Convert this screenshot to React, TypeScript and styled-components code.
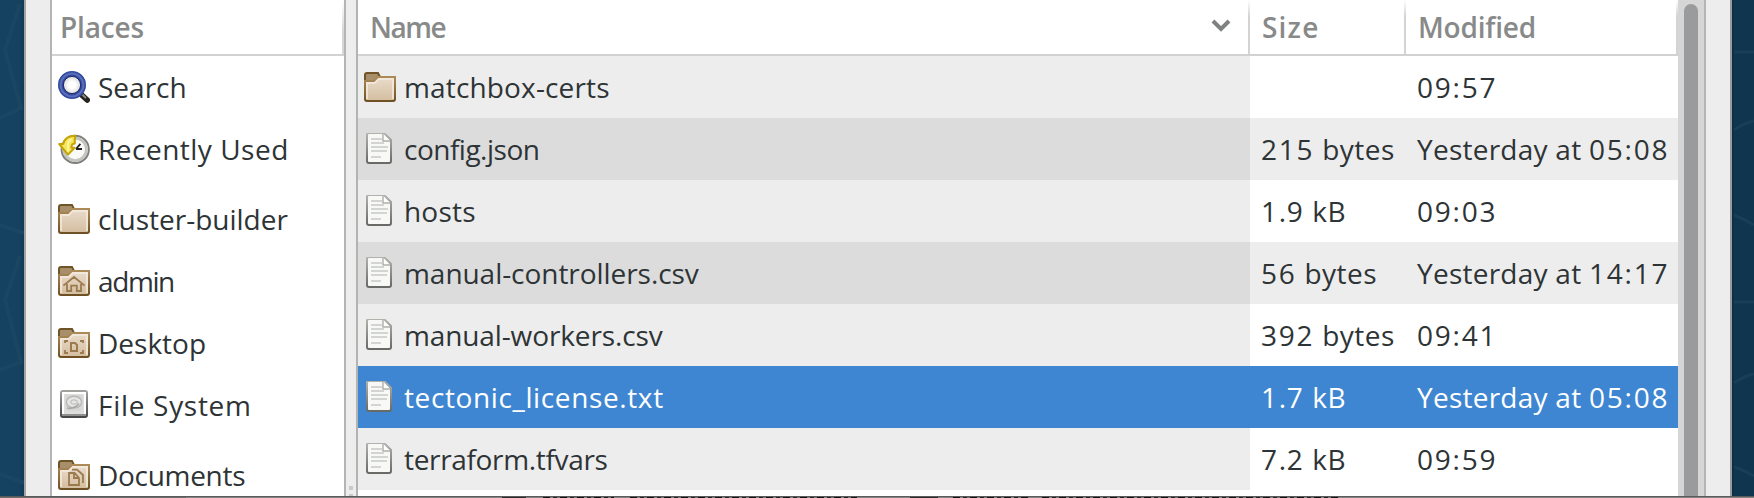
import React from 'react';
import styled, { createGlobalStyle, css } from 'styled-components';

const GlobalStyle = createGlobalStyle`
  * { box-sizing: border-box; }
  html, body { margin: 0; height: 100%; overflow: hidden; background: #144260; }
  body { font-family: 'Open Sans', 'Noto Sans', sans-serif; font-size: 28px; color: #2e3436; }
`;

const Screen = styled.div`
  width: 1754px;
  height: 498px;
  display: flex;
  flex-direction: column;
  overflow: hidden;
`;
const Stage = styled.div`
  height: 496px;
  display: flex;
`;
const Wallpaper = styled.div<{ $width: number; $side: 'left' | 'right' }>`
  width: ${p => p.$width}px;
  flex: none;
  background: ${p => p.$side === 'left'
    ? 'linear-gradient(90deg, #144260 80%, #113a55)'
    : 'linear-gradient(90deg, #0d2c42, #10354f 12%, #10354f)'};
  svg { display: block; }
`;
const Dialog = styled.div`
  width: 1708px;
  flex: none;
  display: flex;
  background: #ededed;
  border-left: 2px solid #a4a4a4;
  border-right: 2px solid #999c9a;
  padding: 0 24px;
`;
const Places = styled.div`
  width: 296px;
  flex: none;
  background: #fff;
  border-left: 2px solid #b4b4b4;
  border-right: 2px solid #b4b4b4;
`;
const PlacesHeader = styled.div`
  height: 56px;
  padding: 8px 0 0 8px;
  border-bottom: 2px solid #d2d2d2;
  color: #888a8a;
  font-weight: 600;
  background: linear-gradient(#fff, #d6d6d6 60%) right / 2px 100% no-repeat;
`;
const Place = styled.div<{ $gap?: boolean }>`
  height: 62px;
  margin-top: ${p => (p.$gap ? 8 : 0)}px;
  padding-left: 6px;
  display: flex;
  align-items: center;
  gap: 8px;
`;
const Label = styled.span<{ $track?: number }>`
  white-space: pre;
  line-height: 38px;
  letter-spacing: ${p => p.$track ?? 0}px;
`;
const Splitter = styled.div`
  width: 10px;
  flex: none;
  display: flex;
  flex-direction: column;
  justify-content: flex-end;
  align-items: center;
  gap: 4px;
  &::before, &::after { content: ''; width: 4px; height: 4px; background: #c9c9c9; }
  &::after { height: 2px; }
`;
const Files = styled.div`
  width: 1322px;
  flex: none;
  background: #fff;
  border-left: 2px solid #b2b4b2;
`;
const columns = css`
  display: grid;
  grid-template-columns: 892px 156px 272px;
`;
const HeaderRow = styled.div`
  ${columns}
  height: 56px;
  border-bottom: 2px solid #d2d2d2;
`;
const HeaderCell = styled.div`
  display: flex;
  justify-content: space-between;
  align-items: flex-start;
  padding: 8px 19px 0 12px;
  color: #888a8a;
  font-weight: 600;
  background: linear-gradient(#fff, #d4d4d4 30%) right / 2px 100% no-repeat;
  svg { margin-top: 11px; }
`;
const FileRow = styled.div<{ $odd: boolean; $selected?: boolean }>`
  ${columns}
  height: 62px;
  color: ${p => (p.$selected ? '#fff' : 'inherit')};
  background: ${p => (p.$selected ? '#3e86d1' : p.$odd ? '#ededed' : '#fff')};
  & > :first-child {
    background: ${p => (p.$selected ? '#3e86d1' : p.$odd ? '#dcdcdc' : '#ededed')};
  }
`;
const NameCell = styled.div`
  display: flex;
  align-items: center;
  gap: 8px;
  padding-left: 6px;
`;
const Cell = styled.div`
  display: flex;
  align-items: center;
  padding-left: 11px;
`;
const Trough = styled.div`
  width: 28px;
  flex: none;
  background: #d5d6d5;
  border-right: 2px solid #b4b6b4;
  padding: 4px 6px 0 6px;
`;
const Thumb = styled.div`
  height: 492px;
  border-radius: 7px 7px 0 0;
  background: #999b9d;
`;
const Taskbar = styled.div`
  height: 2px;
  display: flex;
  background: linear-gradient(90deg, #6b6b6b 186px, #858585 186px);
  border-top: 1px solid #5a5a5a;
`;
const TaskEdge = styled.div<{ $offset: number; $width: number; $worn?: boolean }>`
  margin-left: ${p => p.$offset}px;
  width: ${p => p.$width}px;
  height: 1px;
  background: ${p => (p.$worn
    ? 'repeating-linear-gradient(90deg, #111 0 7px, #858585 7px 10px, #222 10px 14px, #777 14px 17px)'
    : '#2c2c2c')};
`;

const FolderIcon = ({ kind }: { kind?: 'home' | 'desktop' | 'documents' }) => (
  <svg width="32" height="32" viewBox="0 -.5 16 16">
    <defs>
      <linearGradient id="folderFace" x1="0" y1="0" x2="0" y2="1">
        <stop offset="0" stopColor="#eadccb" /><stop offset="1" stopColor="#d3bd9f" />
      </linearGradient>
      <linearGradient id="folderEdge" x1="0" y1="0" x2="0" y2="1">
        <stop offset="0" stopColor="#ad8b59" /><stop offset="1" stopColor="#6f5023" />
      </linearGradient>
    </defs>
    <path d="M.5 13.5V1.5Q.5.5 1.5.5H7L8 2.5V6H.5" fill="#a88f6c" stroke="#6f5428" />
    <path d="M1.5 14.5Q.5 14.5.5 13.5V4.5H5L7 2.5H15.5V13.5Q15.5 14.5 14.5 14.5Z" fill="url(#folderFace)" stroke="url(#folderEdge)" />
    <path d="M1.5 13.5V5.5H5.4L7.4 3.5H14.5V13.5" fill="none" stroke="#f4ebe0" opacity=".75" />
    {kind === 'home' && (
      <path d="M2.7 9.8 8 5.5 13.3 9.8M4.5 9V12.5H6.6V9.8H9.4V12.5H11.5V9" fill="none" stroke="#9b7b4e" strokeWidth=".9" />
    )}
    {kind === 'desktop' && (
      <g fill="none" stroke="#9b7b4e">
        <path d="M3.5 7.5V6.5H5M11 6.5H12.5V7.5M3.5 11V12.5H5M11 12.5H12.5V11" strokeWidth=".9" />
        <path d="M6.5 7.5H8.5L9.5 8.5V11.5H6.5Z" />
      </g>
    )}
    {kind === 'documents' && (
      <g fill="none" stroke="#9b7b4e" strokeWidth=".9">
        <path d="M5.5 6.5H8.3L10.5 9V12.5H5.5Z M8 6.5V9H10.5" />
        <path d="M7 4.8H9.5L12.5 7.5V11.5" />
      </g>
    )}
  </svg>
);

const SearchIcon = () => (
  <svg width="32" height="32" viewBox="0 .5 16 16">
    <defs>
      <radialGradient id="lens"><stop offset=".3" stopColor="#fff" /><stop offset="1" stopColor="#c9cacc" /></radialGradient>
    </defs>
    <path d="M12 12.6 14.6 15" stroke="#25231f" strokeWidth="2.8" strokeLinecap="round" />
    <path d="M12.2 12.4 14 14" stroke="#8b8780" strokeWidth="1" />
    <circle cx="7" cy="7.5" r="5.6" fill="url(#lens)" stroke="#2f4a9e" strokeWidth="2.8" />
    <circle cx="7" cy="7.5" r="5.7" fill="none" stroke="#5b6dba" strokeWidth="1" />
    <circle cx="7" cy="7.5" r="4.3" fill="none" stroke="#232b62" strokeWidth=".5" />
  </svg>
);

const RecentIcon = () => (
  <svg width="32" height="32" viewBox="0 0 16 16">
    <circle cx="8.6" cy="8.2" r="6.8" fill="#fafaf9" stroke="#7e807c" />
    <circle cx="8.6" cy="8.2" r="5.6" fill="none" stroke="#c3c5c0" strokeWidth="1.4" />
    <path d="M9 8H12M9 8 11.2 5.4" stroke="#222" strokeWidth=".9" />
    <path d="M8.6 1.4C4.8 1.4 3.2 3 2.6 5.5H.6L5 10.8 8.3 7.4H6.7C6.7 5.9 7.2 5.2 8.4 5.2V3.2Z" fill="#f5e65a" stroke="#c6a405" strokeLinejoin="round" />
    <path d="M5 9.2V5.6Q5.2 3.6 6.8 3" fill="none" stroke="#fff9ae" strokeWidth=".8" />
  </svg>
);

const DiskIcon = () => (
  <svg width="32" height="32" viewBox="0 .5 16 16">
    <defs>
      <linearGradient id="disk" x1="0" y1="0" x2="0" y2="1"><stop offset="0" stopColor="#a0a29e" /><stop offset="1" stopColor="#454844" /></linearGradient>
    </defs>
    <rect x="1.5" y="1.5" width="13" height="13" rx="1" fill="#dededd" stroke="url(#disk)" />
    <path d="M2.5 13V2.5H13.5V13" fill="none" stroke="#fff" />
    <rect x="3.7" y="3.5" width="8.6" height="8" rx="1.5" fill="#d6d7d6" />
    <ellipse cx="8" cy="7" rx="3.8" ry="2.9" fill="#e6e6e5" stroke="#b6b8b5" strokeWidth=".7" />
    <ellipse cx="8" cy="7" rx="1.6" ry="1.1" fill="none" stroke="#c2c4c1" strokeWidth=".6" />
    <path d="M4.5 10Q8 10.8 10.5 7.8" fill="none" stroke="#a7a9a6" strokeWidth=".8" />
    <path d="M2 13.5H14" stroke="#8e918d" />
  </svg>
);

const FileIcon = () => (
  <svg width="32" height="32" viewBox="0 .5 16 16">
    <defs>
      <linearGradient id="sheet" x1="0" y1="0" x2="0" y2="1"><stop offset="0" stopColor="#b2b3ad" /><stop offset="1" stopColor="#686a65" /></linearGradient>
    </defs>
    <path d="M2.5.5H10L13.5 4V14.5Q13.5 15.5 12.5 15.5H2.5Q1.5 15.5 1.5 14.5V1.5Q1.5.5 2.5.5Z" fill="#f8f8f7" stroke="url(#sheet)" />
    <path d="M3.5 3.5H9M3.5 5.5H10M3.5 7.5H12M3.5 9.5H11.5M3.5 12.5H8.5" stroke="#d3d5d1" strokeWidth="1" />
    <path d="M9.5 1V4.5H13" fill="#fff" stroke="#aeb0aa" strokeWidth=".7" />
  </svg>
);

/* Figures are set wider than the words around them. */
const Value = ({ text, track }: { text: string; track: number }) => (
  <span>
    {text.split(/(\d[\d:]*)/).filter(Boolean).map((part, i) => (
      <Label key={i} $track={/\d/.test(part) ? 1.8 : track}>{part}</Label>
    ))}
  </span>
);

const places = [
  { name: 'Search', icon: <SearchIcon />, track: 0 },
  { name: 'Recently Used', icon: <RecentIcon />, track: 0.5 },
  { name: 'cluster-builder', icon: <FolderIcon />, gap: true, track: 0 },
  { name: 'admin', icon: <FolderIcon kind="home" />, track: -1.4 },
  { name: 'Desktop', icon: <FolderIcon kind="desktop" />, track: 0 },
  { name: 'File System', icon: <DiskIcon />, track: 0.7 },
  { name: 'Documents', icon: <FolderIcon kind="documents" />, gap: true, track: -0.3 },
];

const files = [
  { name: 'matchbox-certs', size: '', modified: '09:57', folder: true, track: 0.15 },
  { name: 'config.json', size: '215 bytes', modified: 'Yesterday at 05:08', track: -0.5 },
  { name: 'hosts', size: '1.9 kB', modified: '09:03', track: 0.2 },
  { name: 'manual-controllers.csv', size: '56 bytes', modified: 'Yesterday at 14:17', track: -0.05 },
  { name: 'manual-workers.csv', size: '392 bytes', modified: '09:41', track: -0.12 },
  { name: 'tectonic_license.txt', size: '1.7 kB', modified: 'Yesterday at 05:08', selected: true, track: 0.62 },
  { name: 'terraform.tfvars', size: '7.2 kB', modified: '09:59', track: -0.33 },
];

export default function App() {
  return (
    <Screen>
      <GlobalStyle />
      <Stage>
        <Wallpaper $width={24} $side="left">
          <svg width="24" height="496" fill="none" stroke="#194763" strokeWidth="4">
            <path d="M20 4 5 50 21 108 0 118M0 225 24 233M20 256 5 300 21 362 0 370M0 474 24 483" />
          </svg>
        </Wallpaper>
        <Dialog>
          <Places>
            <PlacesHeader><Label $track={-0.15}>Places</Label></PlacesHeader>
            {places.map(p => (
              <Place key={p.name} $gap={p.gap}>{p.icon}<Label $track={p.track}>{p.name}</Label></Place>
            ))}
          </Places>
          <Splitter />
          <Files>
            <HeaderRow>
              <HeaderCell><Label $track={-1.5}>Name</Label>
                <svg width="20" height="14" viewBox="0 0 20 14"><path d="M2 2 10 10 18 2" fill="none" stroke="#7f8281" strokeWidth="4" /></svg>
              </HeaderCell>
              <HeaderCell><Label $track={1.2}>Size</Label></HeaderCell>
              <HeaderCell><Label $track={-0.2}>Modified</Label></HeaderCell>
            </HeaderRow>
            {files.map((f, i) => (
              <FileRow key={f.name} $odd={i % 2 === 1} $selected={f.selected}>
                <NameCell>{f.folder ? <FolderIcon /> : <FileIcon />}<Label $track={f.track}>{f.name}</Label></NameCell>
                <Cell><Value text={f.size} track={0.5} /></Cell>
                <Cell><Value text={f.modified} track={0.25} /></Cell>
              </FileRow>
            ))}
          </Files>
          <Trough><Thumb /></Trough>
        </Dialog>
        <Wallpaper $width={22} $side="right">
          <svg width="22" height="496" fill="none" stroke="#183e58" strokeWidth="3">
            <path d="M2 52H22M2 130Q12 123 22 121M2 215Q12 219 22 225M2 302H22M2 383Q12 376 22 374M2 467Q12 470 22 476" />
          </svg>
        </Wallpaper>
      </Stage>
      <Taskbar>
        <TaskEdge $offset={502} $width={24} />
        <TaskEdge $offset={17} $width={71} $worn />
        <TaskEdge $offset={16} $width={227} $worn />
        <TaskEdge $offset={53} $width={28} />
        <TaskEdge $offset={15} $width={75} $worn />
        <TaskEdge $offset={14} $width={298} $worn />
      </Taskbar>
    </Screen>
  );
}
